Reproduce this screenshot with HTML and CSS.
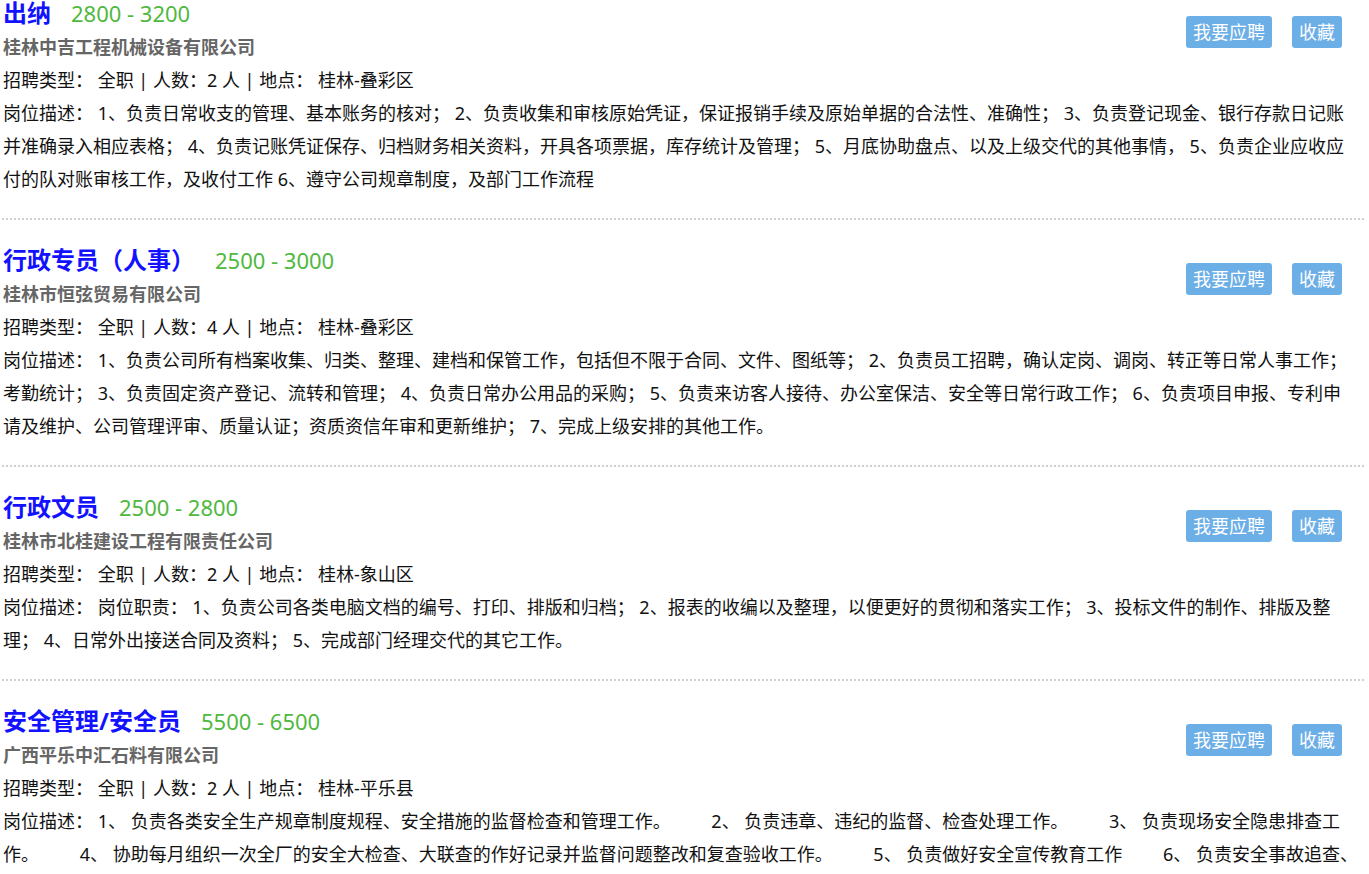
FILE: index.html
```html
<!DOCTYPE html>
<html lang="zh-CN">
<head>
    <meta charset="UTF-8">
    <meta name="viewport" content="width=device-width, initial-scale=1.0">
    <title>招聘信息</title>
    <link rel="stylesheet" href="styles.css">
</head>
<body>
    <div class="job-list">
        <div class="job">
            <div class="job-head">
                <div class="job-main">
                    <h2 class="job-title"><a href="#">出纳</a><span class="salary">2800 - 3200</span></h2>
                    <p class="company">桂林中吉工程机械设备有限公司</p>
                </div>
                <div class="job-actions">
                    <button class="btn">我要应聘</button>
                    <button class="btn">收藏</button>
                </div>
            </div>
            <p class="info">招聘类型：&nbsp;全职 | 人数：2 人 | 地点：&nbsp;桂林-叠彩区</p>
            <p class="desc">岗位描述：&nbsp;1、负责日常收支的管理、基本账务的核对；&nbsp;2、负责收集和审核原始凭证，保证报销手续及原始单据的合法性、准确性；&nbsp;3、负责登记现金、银行存款日记账并准确录入相应表格；&nbsp;4、负责记账凭证保存、归档财务相关资料，开具各项票据，库存统计及管理；&nbsp;5、月底协助盘点、以及上级交代的其他事情，&nbsp;5、负责企业应收应付的队对账审核工作，及收付工作 6、遵守公司规章制度，及部门工作流程</p>
        </div>

        <div class="job">
            <div class="job-head">
                <div class="job-main">
                    <h2 class="job-title"><a href="#">行政专员（人事）</a><span class="salary">2500 - 3000</span></h2>
                    <p class="company">桂林市恒弦贸易有限公司</p>
                </div>
                <div class="job-actions">
                    <button class="btn">我要应聘</button>
                    <button class="btn">收藏</button>
                </div>
            </div>
            <p class="info">招聘类型：&nbsp;全职 | 人数：4 人 | 地点：&nbsp;桂林-叠彩区</p>
            <p class="desc">岗位描述：&nbsp;1、负责公司所有档案收集、归类、整理、建档和保管工作，包括但不限于合同、文件、图纸等；&nbsp;2、负责员工招聘，确认定岗、调岗、转正等日常人事工作；考勤统计；&nbsp;3、负责固定资产登记、流转和管理；&nbsp;4、负责日常办公用品的采购；&nbsp;5、负责来访客人接待、办公室保洁、安全等日常行政工作；&nbsp;6、负责项目申报、专利申请及维护、公司管理评审、质量认证；资质资信年审和更新维护；&nbsp;7、完成上级安排的其他工作。</p>
        </div>

        <div class="job">
            <div class="job-head">
                <div class="job-main">
                    <h2 class="job-title"><a href="#">行政文员</a><span class="salary">2500 - 2800</span></h2>
                    <p class="company">桂林市北桂建设工程有限责任公司</p>
                </div>
                <div class="job-actions">
                    <button class="btn">我要应聘</button>
                    <button class="btn">收藏</button>
                </div>
            </div>
            <p class="info">招聘类型：&nbsp;全职 | 人数：2 人 | 地点：&nbsp;桂林-象山区</p>
            <p class="desc">岗位描述：&nbsp;岗位职责：&nbsp;1、负责公司各类电脑文档的编号、打印、排版和归档；&nbsp;2、报表的收编以及整理，以便更好的贯彻和落实工作；&nbsp;3、投标文件的制作、排版及整理；&nbsp;4、日常外出接送合同及资料；&nbsp;5、完成部门经理交代的其它工作。</p>
        </div>

        <div class="job">
            <div class="job-head">
                <div class="job-main">
                    <h2 class="job-title"><a href="#">安全管理/安全员</a><span class="salary">5500 - 6500</span></h2>
                    <p class="company">广西平乐中汇石料有限公司</p>
                </div>
                <div class="job-actions">
                    <button class="btn">我要应聘</button>
                    <button class="btn">收藏</button>
                </div>
            </div>
            <p class="info">招聘类型：&nbsp;全职 | 人数：2 人 | 地点：&nbsp;桂林-平乐县</p>
            <p class="desc">岗位描述：&nbsp;1、&nbsp;负责各类安全生产规章制度规程、安全措施的监督检查和管理工作。&emsp;&emsp;&nbsp;2、&nbsp;负责违章、违纪的监督、检查处理工作。&emsp;&emsp;&nbsp;3、&nbsp;负责现场安全隐患排查工作。&emsp;&emsp;&nbsp;4、&nbsp;协助每月组织一次全厂的安全大检查、大联查的作好记录并监督问题整改和复查验收工作。&emsp;&emsp;&nbsp;5、&nbsp;负责做好安全宣传教育工作&emsp;&emsp;&nbsp;6、&nbsp;负责安全事故追查、分析、处理和上报工作。&emsp;&emsp;&nbsp;7、&nbsp;完成领导交办的其他工作。</p>
        </div>
    </div>
</body>
</html>
```

FILE: styles.css
```css
* {
    margin: 0;
    padding: 0;
    box-sizing: border-box;
}

body {
    background-color: #fff;
    color: #111;
    font-family: "Noto Sans", "Noto Sans CJK SC", sans-serif;
    font-size: 18px;
}

.job-list {
    margin: -27px 5px 0 2px;
}

.job {
    padding: 23px 6px 22px 1px;
    border-bottom: 2px dotted #d0d0d0;
}

.job-head {
    display: flex;
    justify-content: space-between;
    align-items: flex-start;
}

.job-title {
    font-size: 24px;
    line-height: 34px;
    font-weight: bold;
}

.job-title a {
    color: #1212ff;
    text-decoration: none;
}

.salary {
    margin-left: 20px;
    font-size: 22px;
    line-height: 20px;
    font-weight: normal;
    color: #4fb83e;
}

.company {
    font-size: 18px;
    line-height: 34px;
    font-weight: bold;
    color: #666;
}

.job-actions {
    display: flex;
    gap: 20px;
    margin-top: 20px;
    margin-right: 16px;
}

.btn {
    height: 32px;
    padding: 0 7px;
    border: none;
    border-radius: 3px;
    background-color: #6caee6;
    color: #fff;
    font-family: inherit;
    font-size: 18px;
    line-height: 32px;
    cursor: pointer;
}

.info,
.desc {
    font-size: 18px;
    line-height: 33px;
}
```
